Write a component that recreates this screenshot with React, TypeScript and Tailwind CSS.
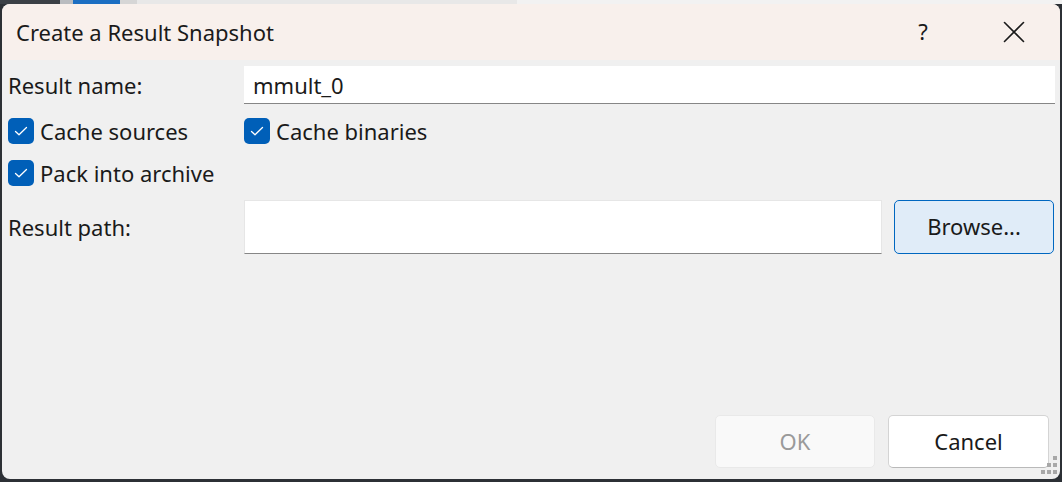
import React, { useState } from 'react';

const font = { fontFamily: '"Segoe UI", "Noto Sans", "Open Sans", sans-serif' };

const CheckBox: React.FC<{ label: string; checked: boolean; onToggle: () => void }> = ({ label, checked, onToggle }) => (
  <button onClick={onToggle} className="flex items-center gap-[6px] text-[22px] text-[#1a1a1a] leading-none">
    <span
      className={
        checked
          ? 'w-[26px] h-[26px] rounded-[5px] bg-[#005fb8] flex items-center justify-center'
          : 'w-[26px] h-[26px] rounded-[5px] bg-white border border-[#8a8a8a] flex items-center justify-center'
      }
    >
      {checked && (
        <svg width="26" height="26" viewBox="0 0 26 26">
          <path d="M7.5 13.5l3.5 3.3 7.5-7.3" fill="none" stroke="#ffffff" strokeWidth="1.3" strokeLinecap="round" strokeLinejoin="round" />
        </svg>
      )}
    </span>
    <span className="pb-[1px]">{label}</span>
  </button>
);

const App: React.FC = () => {
  const [name, setName] = useState('mmult_0');
  const [path, setPath] = useState('');
  const [cacheSources, setCacheSources] = useState(true);
  const [cacheBinaries, setCacheBinaries] = useState(true);
  const [packArchive, setPackArchive] = useState(true);

  return (
    <div className="w-[1062px] h-[482px] bg-[#2c3035] overflow-hidden flex flex-col" style={font}>
      {/* strip of the window behind */}
      <div className="h-[4px] flex shrink-0">
        <div className="w-[60px] bg-[#3b4046]" />
        <div className="w-[13px] bg-[#b9bcc0]" />
        <div className="w-[47px] bg-[#1b6ec2]" />
        <div className="w-[17px] bg-[#d6d6d6]" />
        <div className="w-[380px] bg-[#e8e8e8]" />
        <div className="flex-1 bg-[#f2f2f2]" />
      </div>

      <div className="flex pl-[2px]">
        <div className="relative w-[1058px] h-[475px] rounded-[8px] overflow-hidden bg-[#f0f0f0] flex flex-col">
          {/* title bar */}
          <div className="h-[56px] bg-[#f8f0ec] flex items-center shrink-0">
            <div className="pl-[14px] text-[22px] text-[#1a1a1a] flex-1">Create a Result Snapshot</div>
            <div className="w-[46px] text-center text-[22px] text-[#1a1a1a] pb-[1px]">?</div>
            <div className="w-[106px] flex justify-center pl-[30px]">
              <svg width="22" height="22" viewBox="0 0 22 22">
                <path d="M1.5 1.5l19 19M20.5 1.5l-19 19" stroke="#1a1a1a" strokeWidth="1.6" strokeLinecap="round" />
              </svg>
            </div>
            <div className="w-[8px]" />
          </div>

          {/* body */}
          <div className="flex-1 flex flex-col pl-[6px] pr-[5px] pt-[6px]">
            <div className="flex items-center h-[38px]">
              <div className="w-[236px] text-[22px] text-[#1a1a1a]">Result name:</div>
              <input
                value={name}
                onChange={(e) => setName(e.target.value)}
                className="flex-1 h-[38px] bg-white border-b border-[#868686] px-[9px] text-[22px] text-[#1a1a1a] outline-none"
              />
            </div>

            <div className="flex mt-[14px] h-[26px]">
              <div className="w-[236px] flex">
                <CheckBox label="Cache sources" checked={cacheSources} onToggle={() => setCacheSources(!cacheSources)} />
              </div>
              <CheckBox label="Cache binaries" checked={cacheBinaries} onToggle={() => setCacheBinaries(!cacheBinaries)} />
            </div>

            <div className="flex mt-[16px] h-[26px]">
              <CheckBox label="Pack into archive" checked={packArchive} onToggle={() => setPackArchive(!packArchive)} />
            </div>

            <div className="flex items-center mt-[14px] h-[54px]">
              <div className="w-[236px] text-[22px] text-[#1a1a1a]">Result path:</div>
              <input
                value={path}
                onChange={(e) => setPath(e.target.value)}
                className="w-[638px] h-[54px] bg-white border border-[#e6e6e6] border-b-[#868686] px-[9px] text-[22px] outline-none"
              />
              <button className="ml-[12px] w-[160px] h-[54px] rounded-[5px] bg-[#e0ecf8] border border-[#0067c0] text-[22px] text-[#1a1a1a] pb-[1px]">
                Browse...
              </button>
            </div>

            <div className="flex-1" />

            <div className="flex justify-end gap-[13px] pr-[6px] pb-[11px]">
              <button disabled className="w-[160px] h-[53px] rounded-[5px] bg-[#f9f9f9] border border-[#e9e9e9] text-[22px] text-[#9a9a9a] pb-[1px]">
                OK
              </button>
              <button className="w-[161px] h-[53px] rounded-[5px] bg-white border border-[#d4d4d4] border-b-[#b9b9b9] text-[22px] text-[#1a1a1a] pb-[1px]">
                Cancel
              </button>
            </div>
          </div>

          {/* resize grip */}
          <svg className="absolute right-[2px] bottom-[4px]" width="18" height="20" viewBox="0 0 18 20">
            <rect x="13" y="1" width="4" height="4" fill="#a8a8a8" />
            <rect x="13" y="8" width="4" height="4" fill="#a8a8a8" />
            <rect x="7" y="8" width="4" height="4" fill="#a8a8a8" />
            <rect x="13" y="15" width="4" height="4" fill="#a8a8a8" />
            <rect x="7" y="15" width="4" height="4" fill="#a8a8a8" />
            <rect x="1" y="15" width="4" height="4" fill="#a8a8a8" />
          </svg>
        </div>
      </div>
    </div>
  );
};

export default App;
